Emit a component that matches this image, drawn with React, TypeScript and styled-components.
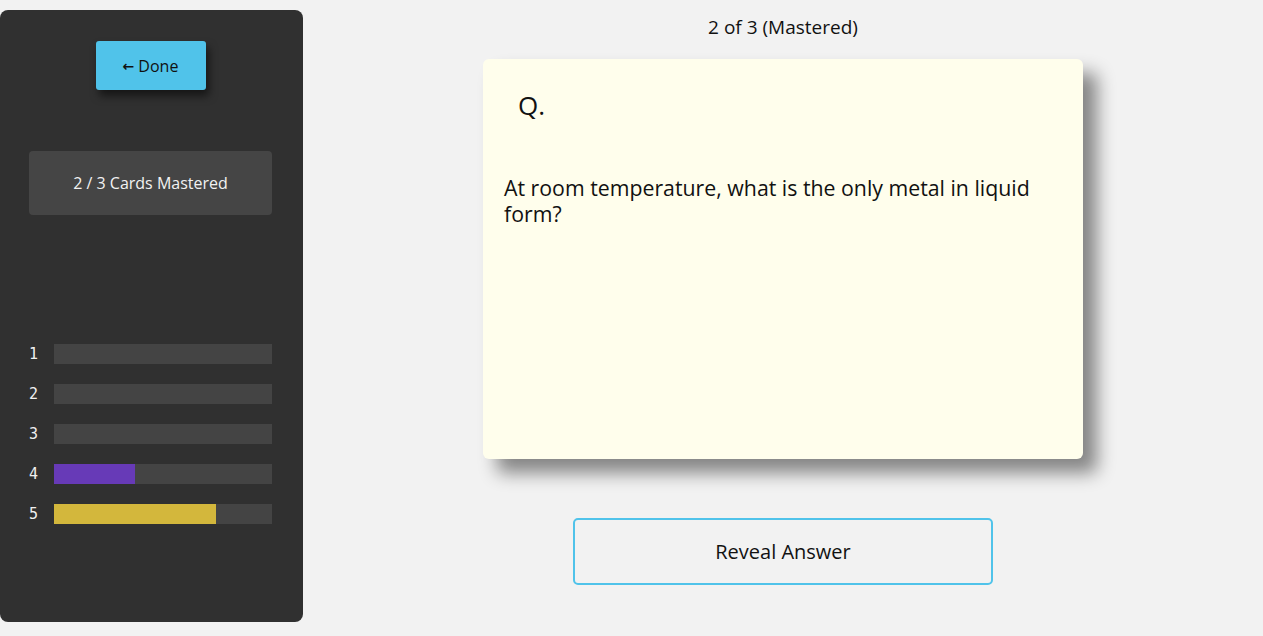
import React from "react";
import styled, { createGlobalStyle } from "styled-components";

const Global = createGlobalStyle`
  html, body { margin: 0; padding: 0; background: #f2f2f2; }
  body { font-family: "Open Sans", "Noto Sans", sans-serif; color: #111; }
`;

const Page = styled.div`
  display: flex;
  height: 636px;
  box-sizing: border-box;
  padding: 10px 0 14px 0;
`;

const Sidebar = styled.aside`
  width: 303px;
  flex: none;
  background: #303030;
  border-radius: 8px;
  display: flex;
  flex-direction: column;
  align-items: center;
  box-sizing: border-box;
  padding: 31px 31px 0 29px;
`;

const DoneButton = styled.button`
  width: 110px;
  height: 49px;
  border: none;
  border-radius: 3px;
  background: #50c3ea;
  color: #111;
  font-family: inherit;
  font-size: 16px;
  box-shadow: 3px 6px 8px rgba(0, 0, 0, 0.55);
  cursor: pointer;
  display: flex;
  align-items: center;
  justify-content: center;
  gap: 4px;
`;

const Arrow = styled.span`
  font-family: "DejaVu Sans", sans-serif;
  font-size: 14px;
  font-weight: bold;
`;

const StatBox = styled.div`
  margin-top: 61px;
  width: 100%;
  height: 64px;
  border-radius: 4px;
  background: #454545;
  color: #f2f2f2;
  font-size: 16px;
  display: flex;
  align-items: center;
  justify-content: center;
`;

const Levels = styled.div`
  margin-top: 129px;
  width: 100%;
  display: flex;
  flex-direction: column;
  gap: 20px;
`;

const LevelRow = styled.div`
  display: flex;
  align-items: center;
  height: 20px;
`;

const LevelLabel = styled.span`
  width: 25px;
  flex: none;
  font-family: "DejaVu Sans Mono", monospace;
  font-size: 15px;
  color: #f0f0f0;
`;

const Track = styled.div`
  flex: 1;
  height: 20px;
  background: #444444;
`;

const Fill = styled.div<{ $color: string }>`
  height: 100%;
  background: ${(p) => p.$color};
`;

const Main = styled.main`
  flex: 1;
  display: flex;
  flex-direction: column;
  align-items: center;
  margin-top: -10px;
`;

const Counter = styled.div`
  margin-top: 16px;
  font-size: 19px;
  height: 22px;
  line-height: 22px;
`;

const Card = styled.section`
  margin-top: 21px;
  width: 600px;
  height: 400px;
  box-sizing: border-box;
  background: #fffeec;
  border-radius: 6px;
  box-shadow: 14px 14px 18px rgba(0, 0, 0, 0.45);
  padding: 28px 20px 20px 21px;
`;

const QLabel = styled.div`
  margin-left: 14px;
  font-size: 26px;
  line-height: 36px;
`;

const Question = styled.p`
  margin: 52px 0 0 0;
  font-size: 21.3px;
  line-height: 26px;
`;

const RevealButton = styled.button`
  margin-top: 59px;
  width: 420px;
  height: 67px;
  background: #f2f2f2;
  border: 2px solid #50c3ea;
  border-radius: 5px;
  font-family: inherit;
  font-size: 20px;
  color: #111;
  cursor: pointer;
`;

const levels = [
  { n: 1, pct: 0, color: "#444" },
  { n: 2, pct: 0, color: "#444" },
  { n: 3, pct: 0, color: "#444" },
  { n: 4, pct: 37.2, color: "#673ab7" },
  { n: 5, pct: 74.3, color: "#d3b73c" },
];

export default function App() {
  return (
    <>
      <Global />
      <Page>
        <Sidebar>
          <DoneButton>
            <Arrow>←</Arrow>
            <span>Done</span>
          </DoneButton>
          <StatBox>2 / 3 Cards Mastered</StatBox>
          <Levels>
            {levels.map((l) => (
              <LevelRow key={l.n}>
                <LevelLabel>{l.n}</LevelLabel>
                <Track>
                  <Fill $color={l.color} style={{ width: `${l.pct}%` }} />
                </Track>
              </LevelRow>
            ))}
          </Levels>
        </Sidebar>
        <Main>
          <Counter>2 of 3 (Mastered)</Counter>
          <Card>
            <QLabel>Q.</QLabel>
            <Question>
              At room temperature, what is the only metal in liquid form?
            </Question>
          </Card>
          <RevealButton>Reveal Answer</RevealButton>
        </Main>
      </Page>
    </>
  );
}
